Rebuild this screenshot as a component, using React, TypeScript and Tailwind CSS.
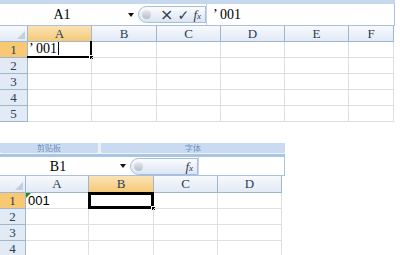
import { FC } from "react";

type Col = { label: string; w: string; active?: boolean };

const topCols: Col[] = [
  { label: "A", w: "w-[64px]", active: true },
  { label: "B", w: "w-[65px]" },
  { label: "C", w: "w-[64px]" },
  { label: "D", w: "w-[64px]" },
  { label: "E", w: "w-[64px]" },
  { label: "F", w: "w-[45px]" },
];

const bottomCols: Col[] = [
  { label: "A", w: "w-[63px]" },
  { label: "B", w: "w-[65px]", active: true },
  { label: "C", w: "w-[64px]" },
  { label: "D", w: "w-[64px]" },
];

const headBg = "bg-linear-to-b from-[#f7f9fc] to-[#e2eaf6]";
const headActive = "bg-linear-to-b from-[#fbe3b4] to-[#f5c977]";

const Pill: FC<{ full?: boolean }> = ({ full }) => (
  <div className="h-[17px] w-[68px] flex items-center rounded-l-full border border-[#a9bdd9] bg-linear-to-b from-[#fbfcfe] to-[#dbe5f2] pl-[3px] pr-[4px]">
    <div className="w-[9px] h-[9px] rounded-full bg-linear-to-b from-[#e6e9ee] to-[#b7bec9]" />
    {full ? (
      <>
        <span className="ml-[9px] text-[16px] leading-none text-[#33404f] font-['DejaVu_Sans',sans-serif]">×</span>
        <span className="ml-[4px] text-[14px] leading-none text-[#33404f] font-['DejaVu_Sans',sans-serif]">✓</span>
      </>
    ) : null}
    <span className="ml-auto text-[13px] italic leading-none text-[#2c3a4a]">
      f<span className="text-[9px]">x</span>
    </span>
  </div>
);

const Arrow = () => (
  <div className="w-0 h-0 border-l-[3px] border-r-[3px] border-t-[4px] border-l-transparent border-r-transparent border-t-[#111]" />
);

const App: FC = () => {
  return (
    <div className="w-[400px] h-[255px] overflow-hidden bg-white text-black font-['Liberation_Serif',serif] text-[13px]">
      {/* top window */}
      <div className="w-[395px]">
        <div className="h-[4px] bg-[#c6d8ee]" />
        <div className="h-[22px] flex items-center border-b border-r border-[#a9c0de]">
          <div className="w-[124px] text-center text-[14px]">A1</div>
          <div className="w-[14px] flex justify-center">
            <Arrow />
          </div>
          <Pill full />
          <div className="flex-1 h-full flex items-center pl-[6px] border-l border-[#c5d3e6] text-[14px]">
            ’ 001
          </div>
        </div>
        <div className="flex h-[16px]">
          <div className={`w-[28px] border-r border-b border-[#9eb6ce] ${headBg} relative`}>
            <div className="absolute right-[2px] bottom-[2px] w-0 h-0 border-l-[8px] border-t-[8px] border-l-transparent border-t-transparent border-r-0 border-b-[8px] border-b-[#c3cfde]" />
          </div>
          {topCols.map((c) => (
            <div
              key={c.label}
              className={`${c.w} flex items-center justify-center border-r border-b border-[#9eb6ce] text-[13px] text-[#2a3d55] ${c.active ? headActive : headBg}`}
            >
              {c.label}
            </div>
          ))}
        </div>
        {[1, 2, 3, 4, 5].map((r) => (
          <div key={r} className="flex h-[16px]">
            <div
              className={`w-[28px] flex items-center justify-center border-r border-b border-[#9eb6ce] text-[13px] text-[#2a3d55] ${r === 1 ? "bg-[#f8c873]" : "bg-[#e2eaf6]"}`}
            >
              {r}
            </div>
            {topCols.map((c) => (
              <div key={c.label} className={`${c.w} border-r border-b border-[#dadfe8] relative`}>
                {r === 1 && c.active ? (
                  <div className="absolute -left-px -top-px right-[-1px] bottom-[-1px] border-b-2 border-r-2 border-black flex items-center pl-[2px] text-[14px]">
                    ’ 001
                    <span className="ml-[1px] w-px h-[13px] bg-black" />
                    <div className="absolute right-[-4px] bottom-[-4px] w-[5px] h-[5px] bg-black border border-white" />
                  </div>
                ) : null}
              </div>
            ))}
          </div>
        ))}
      </div>

      <div className="h-[21px]" />

      {/* bottom window */}
      <div className="w-[285px]">
        <div className="h-[10px] flex gap-[3px] bg-[#e9f0f9]">
          <div className="w-[98px] bg-[#c9dbf1] rounded-b-[2px] flex items-center justify-center text-[8px] leading-none text-[#6f8fbd] font-['Noto_Sans_CJK_SC',sans-serif] blur-[0.6px]">
            剪贴板
          </div>
          <div className="flex-1 bg-[#c9dbf1] rounded-b-[2px] flex items-center justify-center text-[8px] leading-none text-[#6f8fbd] font-['Noto_Sans_CJK_SC',sans-serif] blur-[0.6px]">
            字体
          </div>
        </div>
        <div className="h-[1px] bg-[#eef3fa]" />
        <div className="h-[3px] bg-[#aac4e4]" />
        <div className="h-[19px] flex items-center border-b border-r border-[#a9c0de]">
          <div className="w-[116px] text-center text-[14px]">B1</div>
          <div className="w-[14px] flex justify-center">
            <Arrow />
          </div>
          <Pill />
          <div className="flex-1 h-full border-l border-[#c5d3e6]" />
        </div>
        <div className="flex h-[17px]">
          <div className={`w-[26px] border-r border-b border-[#9eb6ce] ${headBg} relative`}>
            <div className="absolute right-[2px] bottom-[2px] w-0 h-0 border-l-[8px] border-t-[8px] border-l-transparent border-t-transparent border-b-[8px] border-b-[#c3cfde]" />
          </div>
          {bottomCols.map((c) => (
            <div
              key={c.label}
              className={`${c.w} flex items-center justify-center border-r border-b border-[#9eb6ce] text-[13px] text-[#2a3d55] ${c.active ? headActive : headBg}`}
            >
              {c.label}
            </div>
          ))}
        </div>
        {[1, 2, 3, 4].map((r) => (
          <div key={r} className="flex h-[16px]">
            <div
              className={`w-[26px] flex items-center justify-center border-r border-b border-[#9eb6ce] text-[13px] text-[#2a3d55] ${r === 1 ? "bg-[#f8c873]" : "bg-[#e2eaf6]"}`}
            >
              {r}
            </div>
            {bottomCols.map((c) => (
              <div key={c.label} className={`${c.w} border-r border-b border-[#dadfe8] relative`}>
                {r === 1 && c.label === "A" ? (
                  <>
                    <div className="absolute left-0 top-0 w-0 h-0 border-t-[5px] border-r-[5px] border-t-[#1f8a2a] border-r-transparent" />
                    <div className="h-full flex items-center pl-[2px] text-[13px] font-['Liberation_Sans',sans-serif]">001</div>
                  </>
                ) : null}
                {r === 1 && c.active ? (
                  <div className="absolute -left-px -top-px right-[-1px] bottom-[-1px] border-[3px] border-black">
                    <div className="absolute right-[-5px] bottom-[-5px] w-[5px] h-[5px] bg-black border border-white" />
                  </div>
                ) : null}
              </div>
            ))}
          </div>
        ))}
      </div>
    </div>
  );
};

export default App;
